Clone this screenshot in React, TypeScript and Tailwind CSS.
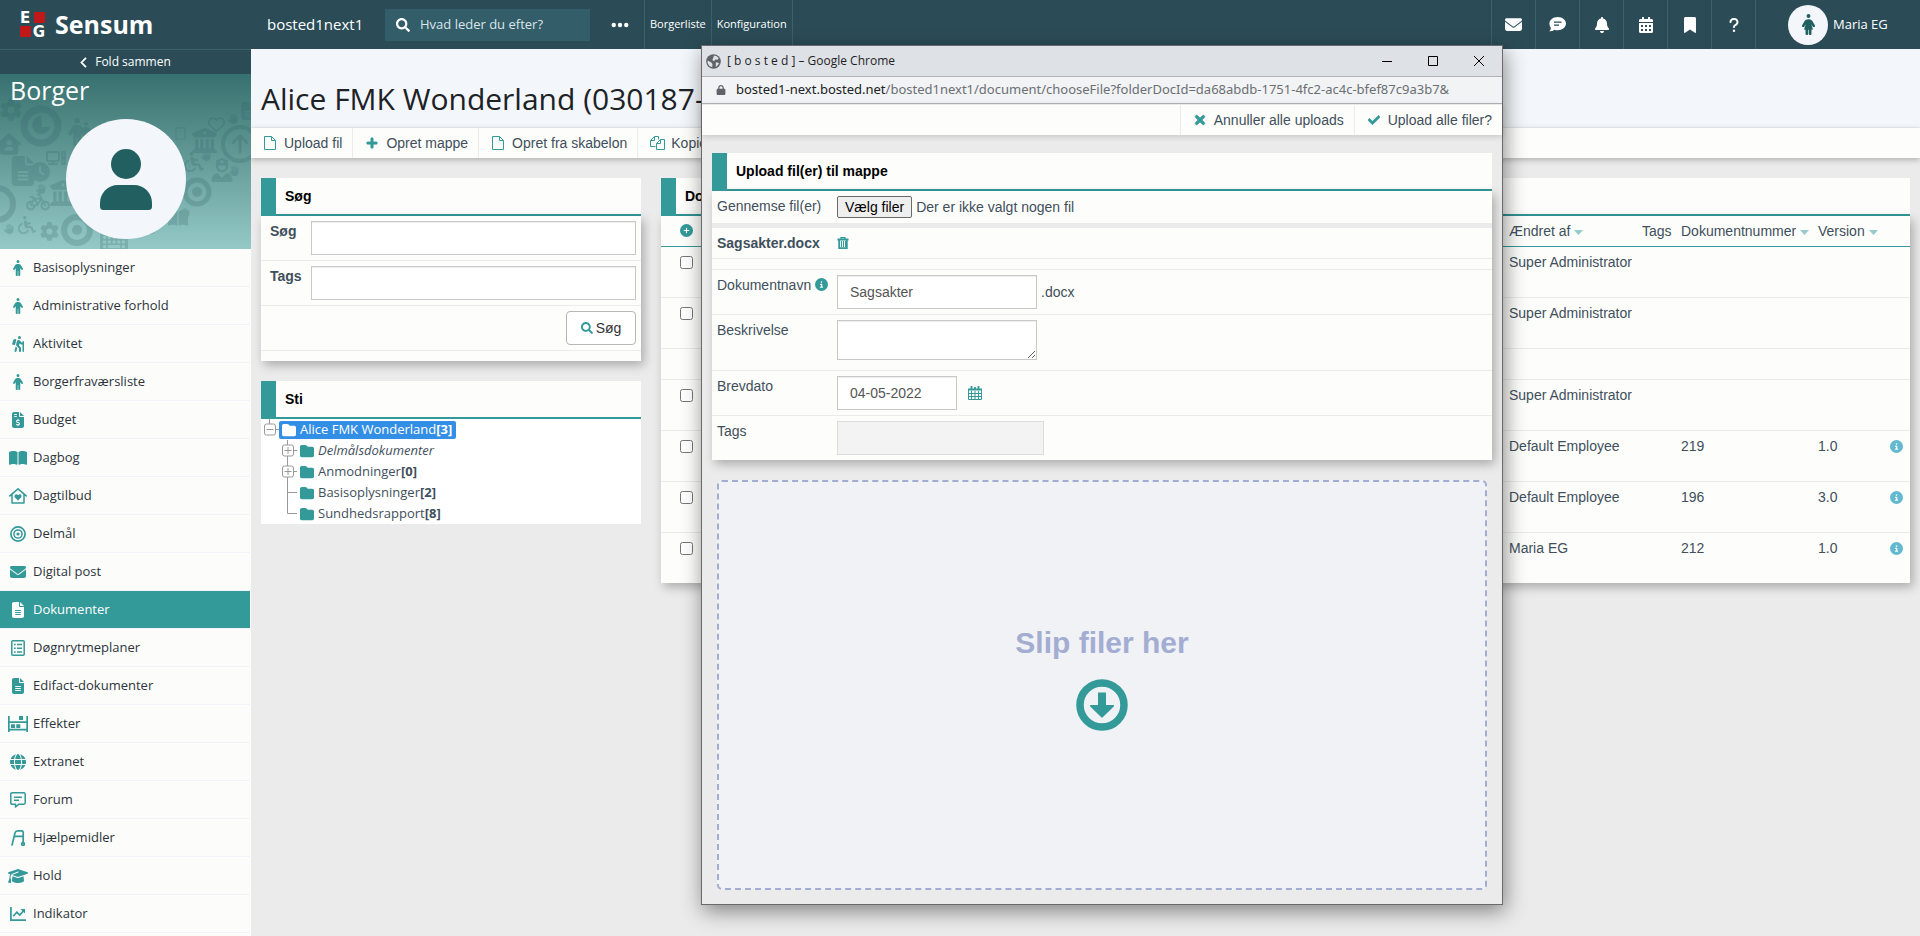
import { useRef, useState } from "react"
import type { ReactNode } from "react"
import {
  FaArrowUp,
  FaBell,
  FaBicycle,
  FaBookOpen,
  FaBookmark,
  FaBuildingColumns,
  FaCircleInfo,
  FaCirclePlus,
  FaClock,
  FaComputer,
  FaEllipsis,
  FaEnvelope,
  FaFileInvoiceDollar,
  FaFileLines,
  FaFolder,
  FaGear,
  FaGlobe,
  FaGraduationCap,
  FaHand,
  FaHouseUser,
  FaKeyboard,
  FaLock,
  FaPerson,
  FaPersonDress,
  FaPersonHiking,
  FaQuestion,
  FaRegHeart,
  FaUserNurse,
  FaWheelchair,
} from "react-icons/fa6"
import { FaCalendarAlt, FaCheck, FaPlus, FaSearch, FaTimes } from "react-icons/fa"

type IconProps = { className?: string }

/* ---------- Ikoner ---------- */

function EgLogo() {
  return (
    <svg width="33" height="37" viewBox="-4 -6 33 37" className="font-['DejaVu_Sans',sans-serif] font-bold" aria-hidden="true">
      <path fill="#c01818" d="M14 0h11v11H14zM0 14h11v11H0z" />
      <text x="5" y="11" fill="#fff" fontSize="15" textAnchor="middle">
        E
      </text>
      <text x="19" y="25" fill="#fff" fontSize="15" textAnchor="middle">
        G
      </text>
    </svg>
  )
}

function FileIcon() {
  return (
    <svg width="12" height="14" viewBox="0 0 12 14" fill="none" stroke="currentColor" aria-hidden="true">
      <path d="M.5.5h7l4 4v9H.5zM7.500.5v4h4" />
    </svg>
  )
}

function FilesIcon() {
  return (
    <svg width="15" height="14" viewBox="0 0 15 14" fill="none" stroke="currentColor" aria-hidden="true">
      <path d="M5.500 10.500h-5v-6l4-4h4v3M4.500.5v4h-4M6.500 7.500l4-4h4v10h-8zM10.500 3.500v4h-4" />
    </svg>
  )
}

function TrashIcon() {
  return (
    <svg width="12" height="12" viewBox="0 0 12 12" fill="none" stroke="currentColor" aria-hidden="true">
      <path strokeWidth="1.800" d="M.5 2.500h11M2.200 3v8.100h7.600V3" />
      <path strokeWidth="1.200" d="M4 2V.7h4V2" />
      <path d="M4.500 4v6M6.500 4v6M8.500 4v6" />
    </svg>
  )
}

function CalendarIcon() {
  return (
    <svg width="14" height="14" viewBox="0 0 14 14" fill="none" stroke="currentColor" aria-hidden="true">
      <path strokeWidth="2" d="M0 3.500h14" />
      <path d="M.5 3v10.500h13V3M.5 7.500h13M.5 10.500h13M3.500 5v9M7 5v9M10.500 5v9" />
      <path strokeWidth="1.800" d="M3.500 0v4M10.500 0v4M7 1v2" />
    </svg>
  )
}

function DropIcon() {
  return (
    <svg width="52" height="52" viewBox="0 0 52 52" aria-hidden="true">
      <circle cx="26" cy="26" r="22" fill="none" stroke="currentColor" strokeWidth="7.500" />
      <path fill="currentColor" d="M22 13.500h8V26h7.300q1.300.4.500 1.500L26.700 38.300q-.7.700-1.400 0L14.200 27.500q-.8-1.100.5-1.500H22z" />
    </svg>
  )
}

function HouseHeartIcon({ className }: IconProps) {
  return (
    <svg width="18" height="16" viewBox="0 0 18 16" className={className} aria-hidden="true">
      <path
        fill="none"
        stroke="currentColor"
        strokeWidth="1.500"
        strokeLinecap="round"
        strokeLinejoin="round"
        d="M.8 7.900L9 .9l8.200 7M3 6.500v8.600h12V6.500"
      />
      <path fill="currentColor" d="M9 12.600L5.700 9.200Q5 7.900 6 6.800q1.500-1.200 3 .4 1.500-1.600 3-.4 1 1.100.3 2.400z" />
    </svg>
  )
}

function TargetIcon({ className }: IconProps) {
  return (
    <svg width="16" height="16" viewBox="0 0 16 16" fill="none" stroke="currentColor" className={className} aria-hidden="true">
      <circle cx="8" cy="8" r="7.100" strokeWidth="1.700" />
      <circle cx="8" cy="8" r="4.100" strokeWidth="1.500" />
      <circle cx="8" cy="8" r="1.600" fill="currentColor" stroke="none" />
    </svg>
  )
}

function ListBoxIcon({ className }: IconProps) {
  return (
    <svg width="14" height="16" viewBox="0 0 14 16" fill="none" stroke="currentColor" className={className} aria-hidden="true">
      <rect x=".8" y=".8" width="12.400" height="14.400" rx="1" strokeWidth="1.500" />
      <path strokeWidth="1.500" d="M3 4.500h1.700M6 4.500h5M3 8.200h1.700M6 8.200h5M3 11.900h1.700M6 11.900h5" />
    </svg>
  )
}

function ShelfIcon({ className }: IconProps) {
  return (
    <svg width="20" height="16" viewBox="0 0 20 16" fill="currentColor" className={className} aria-hidden="true">
      <path d="M0 0h1.700v5.300h16.600V0H20v16h-1.700v-1.500H1.700V16H0zM1.700 7v5.800h16.600V7z" fillRule="evenodd" />
      <path d="M11 0h4v4h-4zM3 8.200h4V12H3zM8.300 8.200h4V12h-4z" />
    </svg>
  )
}

function MessageIcon({ className }: IconProps) {
  return (
    <svg width="16" height="16" viewBox="0 0 16 16" fill="none" stroke="currentColor" strokeWidth="1.500" className={className} aria-hidden="true">
      <path strokeLinejoin="round" d="M2.200.8h11.600q1.400 0 1.400 1.400v8.600q0 1.400-1.400 1.400H9L5.500 15v-2.800H2.200q-1.400 0-1.400-1.400V2.200Q.8.8 2.200.8z" />
      <path d="M4 5.200h8M4 8.200h5" />
    </svg>
  )
}

function WalkerIcon({ className }: IconProps) {
  return (
    <svg width="14" height="16" viewBox="0 0 14 16" fill="none" stroke="currentColor" strokeWidth="1.700" className={className} aria-hidden="true">
      <path d="M.9 15.600L4 3q.6-2.100 2.700-2.100h4q1.500 0 1.500 1.500v10M3.500 6.300h8.700" />
      <circle cx="12" cy="14" r="1.300" />
    </svg>
  )
}

function ChartIcon({ className }: IconProps) {
  return (
    <svg width="16" height="14" viewBox="0 0 16 14" fill="none" stroke="currentColor" strokeWidth="1.700" className={className} aria-hidden="true">
      <path d="M.9 0v13.100H16M3.300 9.200l3.500-3.900 3 2.800 4-4.600" />
      <path fill="currentColor" stroke="none" d="M10.500 2H15v4.500z" />
    </svg>
  )
}

function CommentIcon() {
  return (
    <svg width="17" height="15" viewBox="0 0 17 15" aria-hidden="true">
      <path fill="#fff" d="M8.700 0C13.300 0 17 2.900 17 6.600s-3.700 6.700-8.300 6.700q-1.700 0-3.200-.5Q3.300 14.500.3 14.300q1.500-1.500 1.600-3.200Q.4 9.300.4 6.600C.4 2.900 4.100 0 8.700 0z" />
      <path stroke="#2b4c57" strokeWidth="1.300" d="M5 5.200h7.500M5 8.200h5" />
    </svg>
  )
}

function AvatarIcon() {
  return (
    <svg width="52" height="61" viewBox="0 0 52 61" fill="#215f60" aria-hidden="true">
      <circle cx="26" cy="15" r="15" />
      <path d="M18 36h16c10 0 18 8 18 18v3.500q0 3.500-3.500 3.500h-45Q0 61 0 57.500V54c0-10 8-18 18-18z" />
    </svg>
  )
}

/* ---------- Data ---------- */

const menuItems: { label: string; icon: ReactNode }[] = [
  { label: "Basisoplysninger", icon: <FaPerson size={16} /> },
  { label: "Administrative forhold", icon: <FaPerson size={16} /> },
  { label: "Aktivitet", icon: <FaPersonHiking size={16} /> },
  { label: "Borgerfraværsliste", icon: <FaPerson size={16} /> },
  { label: "Budget", icon: <FaFileInvoiceDollar size={16} /> },
  { label: "Dagbog", icon: <FaBookOpen size={18} /> },
  { label: "Dagtilbud", icon: <HouseHeartIcon /> },
  { label: "Delmål", icon: <TargetIcon /> },
  { label: "Digital post", icon: <FaEnvelope size={16} /> },
  { label: "Dokumenter", icon: <FaFileLines size={16} /> },
  { label: "Døgnrytmeplaner", icon: <ListBoxIcon /> },
  { label: "Edifact-dokumenter", icon: <FaFileLines size={16} /> },
  { label: "Effekter", icon: <ShelfIcon /> },
  { label: "Extranet", icon: <FaGlobe size={16} /> },
  { label: "Forum", icon: <MessageIcon /> },
  { label: "Hjælpemidler", icon: <WalkerIcon /> },
  { label: "Hold", icon: <FaGraduationCap size={20} /> },
  { label: "Indikator", icon: <ChartIcon /> },
]

const topIcons: { label: string; icon: ReactNode }[] = [
  { label: "Post", icon: <FaEnvelope size={17} /> },
  { label: "Beskeder", icon: <CommentIcon /> },
  { label: "Notifikationer", icon: <FaBell size={16} /> },
  { label: "Kalender", icon: <FaCalendarAlt size={16} /> },
  { label: "Bogmærker", icon: <FaBookmark size={16} /> },
  { label: "Hjælp", icon: <FaQuestion size={16} /> },
]

type DocumentRow = { by?: string; number?: string; version?: string; spacer?: boolean }

const rows: DocumentRow[] = [
  { by: "Super Administrator" },
  { by: "Super Administrator" },
  { spacer: true },
  { by: "Super Administrator" },
  { by: "Default Employee", number: "219", version: "1.0" },
  { by: "Default Employee", number: "196", version: "3.0" },
  { by: "Maria EG", number: "212", version: "1.0" },
]

const folders: { name: string; count?: number; expandable?: boolean; italic?: boolean }[] = [
  { name: "Delmålsdokumenter", expandable: true, italic: true },
  { name: "Anmodninger", count: 0, expandable: true },
  { name: "Basisoplysninger", count: 2 },
  { name: "Sundhedsrapport", count: 8 },
]

/* ---------- Fælles dele ---------- */

function PanelHeader({ title }: { title: string }) {
  return (
    <div className="flex h-[38px] border-b-2 border-[#339999] bg-[#fdfdfb]">
      <span className="-mb-0.5 w-[15px] shrink-0 bg-[#339999]" />
      <h2 className="pl-[9px] text-sm leading-9 font-bold text-black">{title}</h2>
    </div>
  )
}

function ToolButton({ icon, children }: { icon: ReactNode; children: ReactNode }) {
  return (
    <button className="flex h-[30px] items-center gap-2 pr-2.5 pl-[13px] text-sm whitespace-nowrap text-[#3f4f5c]">
      <span className="flex w-3 justify-center text-[#339999] [&>svg]:shrink-0">{icon}</span>
      {children}
    </button>
  )
}

function TreeJoint({ kind }: { kind: "minus" | "plus" | "middle" | "last" }) {
  const box = kind === "minus" || kind === "plus"
  return (
    <svg width="18" height="21" viewBox="0 0 18 21" fill="none" stroke="#999" className="shrink-0" aria-hidden="true">
      {kind === "minus" && <path d="M8.500 0v5" />}
      {kind === "plus" && <path d="M8.500 0v21" />}
      {kind === "middle" && <path d="M8.500 0v21M8.500 10.500H18" />}
      {kind === "last" && <path d="M8.500 0v10.500H18" />}
      {box && <path d="M14 10.500h4" />}
      {box && <rect x="3.500" y="5" width="11" height="11" rx="2" fill="#fff" />}
      {box && <path d="M5.500 10.500h7" />}
      {kind === "plus" && <path d="M9 7v7" />}
    </svg>
  )
}

/* ---------- Topbar ---------- */

function TopBar() {
  return (
    <header className="flex h-[49px] bg-[#2b4c57] text-white">
      <div className="flex w-[251px] shrink-0 items-center gap-1.5 pl-4">
        <EgLogo />
        <span className="text-[25px] font-bold">Sensum</span>
      </div>
      <div className="flex items-center pl-4">
        <span className="w-[118px] text-[15px]">bosted1next1</span>
        <label className="flex h-8 w-[205px] items-center gap-2.5 bg-[#335d69] pl-[11px]">
          <FaSearch size={14} className="shrink-0" />
          <input
            aria-label="Søg i Sensum"
            placeholder="Hvad leder du efter?"
            className="w-full min-w-0 bg-transparent text-[13px] outline-none placeholder:text-[#dbe6ea]"
          />
        </label>
        <button aria-label="Mere" className="flex w-[54px] justify-center pl-1.5">
          <FaEllipsis size={20} />
        </button>
      </div>
      <nav className="flex text-[11px] font-medium">
        <a href="#borgerliste" className="flex items-center border-l border-[#3a616c] px-[5px]">
          Borgerliste
        </a>
        <a href="#konfiguration" className="flex items-center border-x border-[#3a616c] px-[5px]">
          Konfiguration
        </a>
      </nav>
      <div className="ml-auto flex">
        {topIcons.map((item) => (
          <button
            key={item.label}
            aria-label={item.label}
            className="flex w-11 items-center justify-center border-l border-[#3a616c]"
          >
            {item.icon}
          </button>
        ))}
        <button className="flex w-[165px] items-center gap-[5px] border-l border-[#3a616c] pl-8 text-[13px]">
          <span className="flex size-10 items-center justify-center rounded-full bg-[#f3f6fa] text-[#215f60]">
            <FaPersonDress size={21} />
          </span>
          Maria EG
        </button>
      </div>
    </header>
  )
}

/* ---------- Venstre menu ---------- */

function BannerPattern() {
  return (
    <svg width="251" height="175" viewBox="0 0 251 175" className="absolute inset-0 text-[#2b5f62]" opacity=".22" aria-hidden="true">
      <FaGear x={0} y={25} size={22} />
      <circle cx="41" cy="52" r="17" fill="none" stroke="currentColor" strokeWidth="7" />
      <path d="M41 42a9 9 0 1 0 9 11h-8z" fill="currentColor" />
      <FaPerson x={63} y={44} size={28} />
      <FaPerson x={76} y={48} size={20} />
      <FaHouseUser x={-3} y={58} size={24} />
      <FaComputer x={46} y={74} size={20} />
      <FaFileLines x={8} y={82} size={30} />
      <FaClock x={30} y={88} size={20} />
      <circle cx="-3" cy="130" r="16" fill="none" stroke="currentColor" strokeWidth="6" />
      <FaHand x={36} y={110} size={10} />
      <FaBicycle x={26} y={116} size={24} />
      <FaBuildingColumns x={50} y={106} size={26} />
      <FaWheelchair x={18} y={142} size={18} />
      <FaHand x={4} y={150} size={10} />
      <FaGear x={40} y={148} size={19} />
      <circle cx="77" cy="156" r="13" fill="none" stroke="currentColor" strokeWidth="6" />
      <circle cx="77" cy="156" r="5" fill="currentColor" />
      <FaKeyboard x={100} y={154} size={28} />
      <FaHand x={146} y={150} size={10} />
      <FaBookOpen x={168} y={134} size={20} />
      <FaRegHeart x={208} y={42} size={17} />
      <FaHand x={228} y={40} size={10} />
      <FaFileLines x={239} y={28} size={18} />
      <rect x="176" y="54" width="9" height="11" fill="none" stroke="currentColor" />
      <FaBuildingColumns x={192} y={54} size={25} />
      <circle cx="240" cy="70" r="17" fill="none" stroke="currentColor" strokeWidth="4" />
      <FaArrowUp x={229} y={59} size={22} />
      <FaWheelchair x={184} y={78} size={20} />
      <FaHand x={201} y={77} size={10} />
      <FaUserNurse x={210} y={84} size={24} />
      <circle cx="197" cy="118" r="12" fill="none" stroke="currentColor" strokeWidth="5" />
      <circle cx="197" cy="118" r="5" fill="currentColor" />
      <FaHand x={229} y={92} size={10} />
      <FaHand x={180} y={134} size={10} />
    </svg>
  )
}

function Sidebar() {
  const [active, setActive] = useState("Dokumenter")

  return (
    <aside className="w-[251px] shrink-0 bg-[#fcfcfa]">
      <button className="flex h-[25px] w-full items-center justify-center gap-2 border-t border-[#3a616c] bg-[#2b4c57] text-xs text-white">
        <svg width="7" height="11" viewBox="0 0 7 11" fill="none" stroke="currentColor" strokeWidth="1.800" aria-hidden="true">
          <path d="M6 .8L1.500 5.500 6 10.200" />
        </svg>
        Fold sammen
      </button>
      <div className="relative h-[175px] overflow-hidden bg-gradient-to-b from-[#37716f] to-[#94c9c7]">
        <BannerPattern />
        <p className="relative pl-2.5 text-[25px] leading-8 text-white">Borger</p>
        <div className="relative mx-auto mt-[13px] flex size-[120px] items-center justify-center rounded-full bg-[#f3f6fa]">
          <AvatarIcon />
        </div>
      </div>
      <nav className="pr-px">
        {menuItems.map((item) => {
          const selected = item.label === active
          return (
            <a
              key={item.label}
              href="#menu"
              onClick={() => setActive(item.label)}
              className={`flex h-[38px] items-center border-b border-[#f0f3f8] pl-2 text-[13px] ${
                selected ? "bg-[#339999] text-white" : "text-[#2b343c]"
              }`}
            >
              <span className={`flex w-5 justify-center ${selected ? "text-white" : "text-[#339999]"}`}>
                {item.icon}
              </span>
              <span className="pl-[5px]">{item.label}</span>
            </a>
          )
        })}
      </nav>
    </aside>
  )
}

/* ---------- Søg + Sti ---------- */

function SearchPanel() {
  return (
    <section>
      <PanelHeader title="Søg" />
      <form
        onSubmit={(e) => e.preventDefault()}
        className="bg-[#fdfdfb] pb-2.5 text-sm text-[#3f4f5c] shadow-[3px_4px_10px_rgba(0,0,0,0.28)]"
      >
        {["Søg", "Tags"].map((name) => (
          <div key={name} className="flex border-b border-[#ebebeb] py-[5px] pr-[5px] pl-[9px]">
            <label htmlFor={`search-${name}`} className="w-[41px] shrink-0 leading-5 font-bold">
              {name}
            </label>
            <input
              id={`search-${name}`}
              className="h-[34px] min-w-0 flex-1 border border-[#c8c8c8] bg-white px-3 shadow-[inset_0_1px_1px_rgba(0,0,0,0.075)]"
            />
          </div>
        ))}
        <div className="flex justify-end border-b border-[#ebebeb] p-[5px]">
          <button className="flex h-[34px] w-[70px] items-center justify-center gap-[3px] rounded-sm border border-[#b8b8b8] bg-white text-[#333]">
            <FaSearch size={12} className="text-[#339999]" />
            Søg
          </button>
        </div>
      </form>
    </section>
  )
}

function PathPanel() {
  return (
    <section>
      <PanelHeader title="Sti" />
      <ul className="bg-white text-[13px] text-[#3f4f5c]">
        <li className="flex h-[21px] items-center">
          <TreeJoint kind="minus" />
          <a href="#root" className="flex h-[18px] items-center gap-1 rounded-xs bg-[#338fe6] pr-1 pl-[3px] text-white">
            <FaFolder size={14} />
            <span>
              Alice FMK Wonderland<b>[3]</b>
            </span>
          </a>
        </li>
        {folders.map((folder, i) => (
          <li key={folder.name} className="flex h-[21px] items-center pl-[18px]">
            <TreeJoint kind={folder.expandable ? "plus" : i === folders.length - 1 ? "last" : "middle"} />
            <a href="#folder" className="flex items-center gap-1 pl-[3px]">
              <FaFolder size={14} className="text-[#339999]" />
              <span className={folder.italic ? "italic" : ""}>
                {folder.name}
                {folder.count !== undefined && <b>[{folder.count}]</b>}
              </span>
            </a>
          </li>
        ))}
      </ul>
    </section>
  )
}

/* ---------- Dokumentliste ---------- */

function SortArrow() {
  return (
    <svg width="9" height="5" viewBox="0 0 9 5" className="ml-1 inline-block align-middle" aria-hidden="true">
      <path fill="#93cccb" d="M0 0h9L4.500 5z" />
    </svg>
  )
}

function DocumentsPanel() {
  return (
    <section className="min-w-0 flex-1">
      <PanelHeader title="Dokumenter" />
      <table className="w-full table-fixed bg-[#fdfdfb] text-left text-sm text-[#3f4f5c] shadow-[3px_4px_10px_rgba(0,0,0,0.28)]">
        <colgroup>
          <col className="w-12" />
          <col />
          <col className="w-[133px]" />
          <col className="w-[39px]" />
          <col className="w-[137px]" />
          <col className="w-[72px]" />
          <col className="w-[25px]" />
        </colgroup>
        <thead>
          <tr className="h-[30px] border-b border-[#339999] whitespace-nowrap [&>th]:px-[5px] [&>th]:font-normal">
            <th>
              <FaCirclePlus size={13} className="ml-3.5 text-[#339999]" />
            </th>
            <th />
            <th>
              Ændret af
              <SortArrow />
            </th>
            <th>Tags</th>
            <th>
              Dokumentnummer
              <SortArrow />
            </th>
            <th>
              Version
              <SortArrow />
            </th>
            <th />
          </tr>
        </thead>
        <tbody>
          {rows.map((row, i) => (
            <tr
              key={i}
              className={`border-b border-[#ebebeb] align-top last:border-b-0 [&>td]:px-[5px] [&>td]:pt-[5px] [&>td]:leading-5 ${
                row.spacer ? "h-[31px]" : "h-[51px]"
              }`}
            >
              <td>
                {!row.spacer && (
                  <input
                    type="checkbox"
                    aria-label={`Vælg dokument ${i + 1}`}
                    className="mt-1 ml-3.5 block size-[13px]"
                  />
                )}
              </td>
              <td />
              <td>{row.by}</td>
              <td />
              <td>{row.number}</td>
              <td>{row.version}</td>
              <td>{row.number && <FaCircleInfo size={13} className="mt-1 text-[#63bad0]" />}</td>
            </tr>
          ))}
        </tbody>
      </table>
    </section>
  )
}

/* ---------- Upload-vindue ---------- */

function FormRow({ label, htmlFor, children }: { label: ReactNode; htmlFor: string; children: ReactNode }) {
  return (
    <div className="flex border-b border-[#ebebeb] p-[5px] last:border-b-0">
      <label htmlFor={htmlFor} className="flex w-[120px] shrink-0 gap-1 leading-5">
        {label}
      </label>
      <div className="flex items-center">{children}</div>
    </div>
  )
}

function UploadWindow() {
  const fileInput = useRef<HTMLInputElement>(null)
  const field = "border border-[#c8c8c8] bg-white px-3 text-[#555] shadow-[inset_0_1px_1px_rgba(0,0,0,0.075)]"

  return (
    <div
      role="dialog"
      aria-label="Upload fil(er)"
      className="absolute top-[45px] left-[701px] flex h-[860px] w-[802px] flex-col border border-[#6a6a6c] bg-[#ebebeb] shadow-[2px_6px_20px_rgba(0,0,0,0.45)]"
    >
      <div className="flex h-[31px] shrink-0 items-center border-b border-[#b1b3b6] bg-[#dee1e6] pl-1 text-xs text-[#1f1f1f]">
        <svg width="15" height="15" viewBox="0 0 15 15" aria-hidden="true">
          <circle cx="7.500" cy="7.500" r="7.300" fill="#5f6368" />
          <path
            fill="#dee1e6"
            d="M1.500 6.500l3.600 1.700 1.400 2-.3 3Q3 12.700 1.700 9.500zM8 1.600q3 .2 4.700 2.500l-1 1.700-2.500-.4-1.100 1.800L6.300 6 7.200 4zM9.800 8.300l3.300.8q-.9 2.700-3.300 3.900z"
          />
        </svg>
        <span className="pl-1.5">[ b o s t e d ] – Google Chrome</span>
        <div className="ml-auto flex text-black">
          <button aria-label="Minimer" className="flex h-7 w-[46px] items-center justify-center">
            <svg width="10" height="10" viewBox="0 0 10 10" stroke="currentColor">
              <path d="M0 5.500h10" />
            </svg>
          </button>
          <button aria-label="Maksimer" className="flex h-7 w-[46px] items-center justify-center">
            <svg width="10" height="10" viewBox="0 0 10 10" fill="none" stroke="currentColor">
              <path d="M.5.5h9v9h-9z" />
            </svg>
          </button>
          <button aria-label="Luk" className="flex h-7 w-[46px] items-center justify-center">
            <svg width="10" height="10" viewBox="0 0 10 10" stroke="currentColor">
              <path d="M0 0l10 10M10 0L0 10" />
            </svg>
          </button>
        </div>
      </div>
      <div className="flex h-[27px] shrink-0 items-center gap-2.5 border-b border-[#b1b3b6] bg-[#f1f3f4] pl-3.5 whitespace-nowrap text-[#6b6f74]">
        <FaLock size={10} className="text-[#5f6368]" />
        <span className="font-['Noto_Sans',sans-serif] text-[13px]">
          <span className="text-[#202124]">bosted1-next.bosted.net</span>
          /bosted1next1/document/chooseFile?folderDocId=da68abdb-1751-4fc2-ac4c-bfef87c9a3b7&amp;
        </span>
      </div>

      <div className="flex min-h-0 flex-1 flex-col font-['Liberation_Sans',Arial,sans-serif]">
        <div className="flex justify-end border-t border-[#ebebeb] bg-[#fdfdfb] shadow-[0_2px_6px_rgba(0,0,0,0.15)] [&>button]:border-l [&>button]:border-[#ebebeb]">
          <ToolButton icon={<FaTimes size={14} strokeWidth={30} stroke="currentColor" />}>Annuller alle uploads</ToolButton>
          <ToolButton icon={<FaCheck size={12} strokeWidth={30} stroke="currentColor" />}>Upload alle filer?</ToolButton>
        </div>

        <section className="mx-2.5 mt-[18px]">
          <PanelHeader title="Upload fil(er) til mappe" />
          <div className="bg-[#fdfdfb] text-sm text-[#3f4f5c] shadow-[3px_4px_10px_rgba(0,0,0,0.28)]">
            <div className="flex border-b-[5px] border-[#ebebeb] p-[5px]">
              <label htmlFor="files" className="w-[120px] leading-5">
                Gennemse fil(er)
              </label>
              <button
                onClick={() => fileInput.current?.click()}
                className="h-[22px] rounded-xs border border-[#6b6b6b] bg-[#efefef] px-[7px] text-black"
              >
                Vælg filer
              </button>
              <span className="pl-1 leading-[22px]">Der er ikke valgt nogen fil</span>
              <input ref={fileInput} id="files" type="file" multiple className="hidden" />
            </div>
            <div className="flex border-b border-[#ebebeb] p-[5px] leading-5">
              <b className="w-[120px]">Sagsakter.docx</b>
              <button aria-label="Slet Sagsakter.docx" className="text-[#339999]">
                <TrashIcon />
              </button>
            </div>
            <div className="h-[11px] border-b border-[#ebebeb]" />
            <FormRow
              htmlFor="name"
              label={
                <>
                  Dokumentnavn <FaCircleInfo size={13} className="mt-[3px] text-[#339999]" />
                </>
              }
            >
              <input id="name" defaultValue="Sagsakter" className={`h-[34px] w-[200px] ${field}`} />
              <span className="pl-1">.docx</span>
            </FormRow>
            <FormRow htmlFor="description" label="Beskrivelse">
              <textarea id="description" className={`mb-[5px] block h-10 w-[200px] ${field}`} />
            </FormRow>
            <FormRow htmlFor="date" label="Brevdato">
              <input id="date" defaultValue="04-05-2022" className={`h-[34px] w-[120px] ${field}`} />
              <button aria-label="Vælg dato" className="pl-[11px] text-[#339999]">
                <CalendarIcon />
              </button>
            </FormRow>
            <FormRow htmlFor="tags" label="Tags">
              <input id="tags" disabled className="h-[34px] w-[207px] border border-[#dcdcdc] bg-[#f3f3f3] px-3" />
            </FormRow>
          </div>
        </section>

        <div className="mx-[15px] mt-5 mb-3.5 flex flex-1 flex-col items-center justify-center gap-[18px] rounded-[5px] border-2 border-dashed border-[#a3add2] bg-[#f0f2f6] pb-3.5 text-[#339999]">
          <p className="text-[30px] leading-9 font-bold text-[#a3add2]">Slip filer her</p>
          <DropIcon />
        </div>
      </div>
    </div>
  )
}

export default function App() {
  return (
    <div className="relative flex min-h-screen flex-col overflow-hidden bg-[#ebebeb] font-['Open_Sans',sans-serif]">
      <TopBar />
      <div className="flex flex-1">
        <Sidebar />
        <main className="min-w-0 flex-1">
          <div className="flex h-[79px] items-end border-b border-[#ebeff2] bg-[#f3f7fb] pb-[5px] pl-2.5">
            <h1 className="text-[30px] leading-[46px] text-[#1d2226]">Alice FMK Wonderland (030187-</h1>
          </div>
          <div className="font-['Liberation_Sans',Arial,sans-serif]">
            <div className="flex bg-[#fdfdfb] shadow-[0_2px_6px_rgba(0,0,0,0.25)] [&>button]:border-r [&>button]:border-[#ebebeb]">
              <ToolButton icon={<FileIcon />}>Upload fil</ToolButton>
              <ToolButton icon={<FaPlus size={12} strokeWidth={30} stroke="currentColor" />}>Opret mappe</ToolButton>
              <ToolButton icon={<FileIcon />}>Opret fra skabelon</ToolButton>
              <ToolButton icon={<FilesIcon />}>Kopier</ToolButton>
            </div>
            <div className="flex items-start gap-5 px-2.5 pt-5">
              <div className="flex w-[380px] shrink-0 flex-col gap-5">
                <SearchPanel />
                <div className="font-['Open_Sans',sans-serif] [&_h2]:font-['Liberation_Sans',Arial,sans-serif]">
                  <PathPanel />
                </div>
              </div>
              <DocumentsPanel />
            </div>
          </div>
        </main>
      </div>
      <UploadWindow />
    </div>
  )
}
